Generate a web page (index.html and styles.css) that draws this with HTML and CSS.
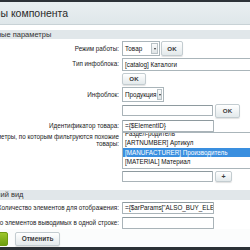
FILE: index.html
```html
<!DOCTYPE html>
<html lang="ru">
<head>
    <meta charset="UTF-8">
    <title>Параметры компонента</title>
    <link rel="stylesheet" href="styles.css">
</head>
<body>
    <div class="dialog">
        <div class="dialog-top"></div>
        <div class="dialog-head">Параметры компонента</div>

        <div class="dialog-body">
            <div class="section-title">Основные параметры</div>

            <div class="form-row row-mode">
                <div class="form-label">Режим работы:</div>
                <div class="form-field inline">
                    <div class="select select-mode"><span>Товар</span><i class="arrow"></i></div>
                    <button class="btn btn-ok">OK</button>
                </div>
            </div>

            <div class="form-row row-type">
                <div class="form-label">Тип инфоблока:</div>
                <div class="form-field">
                    <div class="select select-wide"><span>[catalog] Каталоги</span></div>
                    <button class="btn btn-ok btn-under">OK</button>
                </div>
            </div>

            <div class="form-row row-iblock">
                <div class="form-label">Инфоблок:</div>
                <div class="form-field">
                    <div class="select select-iblock"><span>Продукция</span><i class="arrow"></i></div>
                    <div class="inline field-gap">
                        <div class="input input-short"></div>
                        <button class="btn btn-ok btn-big">OK</button>
                    </div>
                </div>
            </div>

            <div class="form-row row-id">
                <div class="form-label">Идентификатор товара:</div>
                <div class="form-field">
                    <div class="input">={$ElementID}</div>
                </div>
            </div>

            <div class="form-row row-props">
                <div class="form-label">Параметры, по которым фильтруются похожие<br>товары:</div>
                <div class="form-field">
                    <div class="listbox">
                        <div class="listbox-inner">
                            <div class="list-item">Раздел-родитель</div>
                            <div class="list-item">[ARTNUMBER] Артикул</div>
                            <div class="list-item selected">[MANUFACTURER] Производитель</div>
                            <div class="list-item">[MATERIAL] Материал</div>
                        </div>
                    </div>
                    <div class="inline field-gap">
                        <div class="input input-short"></div>
                        <button class="btn btn-plus">+</button>
                    </div>
                </div>
            </div>

            <div class="section-title section-view">Внешний вид</div>

            <div class="form-row row-count">
                <div class="form-label">Количество элементов для отображения:</div>
                <div class="form-field">
                    <div class="input">={$arParams["ALSO_BUY_ELEMENT_COUNT"]}</div>
                </div>
            </div>

            <div class="form-row row-line">
                <div class="form-label">Количество элементов выводимых в одной строке:</div>
                <div class="form-field">
                    <div class="input"></div>
                </div>
            </div>
        </div>

        <div class="dialog-buttons">
            <button class="btn-save">Сохранить</button>
            <button class="btn btn-cancel">Отменить</button>
        </div>
        <div class="dialog-bottom"></div>
    </div>
</body>
</html>
```

FILE: styles.css
```css
* {
    margin: 0;
    padding: 0;
    box-sizing: border-box;
    font-family: 'Liberation Sans', Arial, sans-serif;
}

body {
    width: 250px;
    height: 250px;
    overflow: hidden;
    background-color: #ffffff;
}

.dialog {
    margin-left: -60px;
    width: 340px;
    height: 250px;
    display: flex;
    flex-direction: column;
    background-color: #ffffff;
    color: #222;
}

.dialog-top {
    height: 2px;
    background-color: #2d3338;
}

.dialog-head {
    height: 23px;
    line-height: 22px;
    padding-left: 12px;
    font-size: 10.5px;
    color: #2a2a2a;
    background: linear-gradient(#e9eff1, #dfe7ea);
    border-bottom: 1px solid #c8d2d6;
}

.dialog-body {
    flex: 1;
    padding-top: 5px;
}

.section-title {
    height: 9px;
    line-height: 9px;
    padding-left: 35px;
    font-size: 7.5px;
    color: #333;
    background-color: #e1e7ea;
}

.section-view {
    height: 10px;
    line-height: 10px;
    margin-top: 8px;
    padding-left: 37px;
}

.form-row {
    display: grid;
    grid-template-columns: 180px 1fr;
    column-gap: 2px;
    font-size: 6.3px;
}

.form-label {
    display: flex;
    justify-content: flex-end;
    text-align: right;
    white-space: nowrap;
    padding-right: 1px;
    color: #222;
}

.form-field {
    display: flex;
    flex-direction: column;
    align-items: flex-start;
}

.inline {
    display: flex;
    flex-direction: row;
    align-items: center;
    gap: 1px;
}

.field-gap {
    margin-top: 2px;
    gap: 2px;
}

.row-mode {
    margin-top: 2px;
}

.row-mode .form-label {
    line-height: 15px;
}

.row-type {
    margin-top: 2px;
}

.row-type .form-label {
    line-height: 12px;
}

.row-iblock {
    margin-top: 2px;
}

.row-iblock .form-label {
    line-height: 15px;
}

.row-id {
    margin-top: 2px;
}

.row-id .form-label {
    line-height: 12px;
}

.row-props .form-label {
    padding-top: 1px;
    line-height: 7px;
}

.row-count {
    margin-top: 2px;
}

.row-count .form-label,
.row-line .form-label {
    line-height: 12px;
}

.row-line {
    margin-top: 3px;
}

/* select boxes */
.select {
    display: flex;
    align-items: center;
    justify-content: space-between;
    background-color: #fff;
    border: 1px solid #aab5ba;
    padding-left: 2px;
    color: #111;
    white-space: nowrap;
}

.select-mode {
    width: 38px;
    height: 15px;
}

.select-wide {
    width: 200px;
    height: 13px;
}

.select-iblock {
    width: 42px;
    height: 15px;
}

.arrow {
    width: 7px;
    height: 11px;
    margin-right: 1px;
    border: 1px solid #b9c2c6;
    background: linear-gradient(#fafbfb, #dfe4e6);
    position: relative;
}

.arrow::after {
    content: "";
    position: absolute;
    left: 1.5px;
    top: 4px;
    border-left: 1.5px solid transparent;
    border-right: 1.5px solid transparent;
    border-top: 2px solid #333;
}

/* inputs */
.input {
    width: 92px;
    height: 12px;
    line-height: 10px;
    padding-left: 2px;
    border: 1px solid #a9b3b8;
    border-top-color: #8e9a9f;
    border-radius: 1px;
    background-color: #fff;
    color: #111;
    white-space: nowrap;
    overflow: hidden;
}

.input-short {
    width: 91px;
    height: 11px;
}

/* buttons */
.btn {
    display: flex;
    align-items: center;
    justify-content: center;
    height: 15px;
    padding: 0 6px;
    border: 1px solid #c3ccd0;
    border-radius: 2px;
    background: linear-gradient(#ffffff, #e3e9eb);
    box-shadow: 0 1px 1px rgba(0, 0, 0, 0.12);
    font-size: 6.2px;
    font-weight: bold;
    color: #3a3a3a;
}

.btn-ok {
    width: 22px;
}

.btn-under {
    width: 24px;
    height: 12px;
    margin-top: 2px;
}

.btn-big {
    width: 25px;
    height: 14px;
}

.btn-plus {
    width: 17px;
    height: 11px;
    font-size: 7px;
}

/* multi select */
.listbox {
    width: 200px;
    height: 37px;
    overflow: hidden;
    border: 1px solid #aab5ba;
    background-color: #fff;
}

.listbox-inner {
    margin-top: -4px;
}

.list-item {
    height: 9.5px;
    line-height: 9.5px;
    padding-left: 2px;
    color: #111;
    white-space: nowrap;
}

.list-item.selected {
    background-color: #3a8fdf;
    color: #fff;
}

/* footer */
.dialog-buttons {
    display: flex;
    gap: 7px;
    height: 22px;
    padding: 3px 0 0 13px;
    background-color: #fbfcfc;
}

.btn-save {
    width: 55px;
    height: 14px;
    border: 1px solid #6e9a12;
    border-radius: 2px;
    background: linear-gradient(#9cc62b, #6d9f10);
    font-size: 6.5px;
    font-weight: bold;
    color: #fff;
}

.btn-cancel {
    width: 45px;
    height: 14px;
    font-size: 6.5px;
}

.dialog-bottom {
    height: 4px;
    background-color: #2b3136;
}
```
